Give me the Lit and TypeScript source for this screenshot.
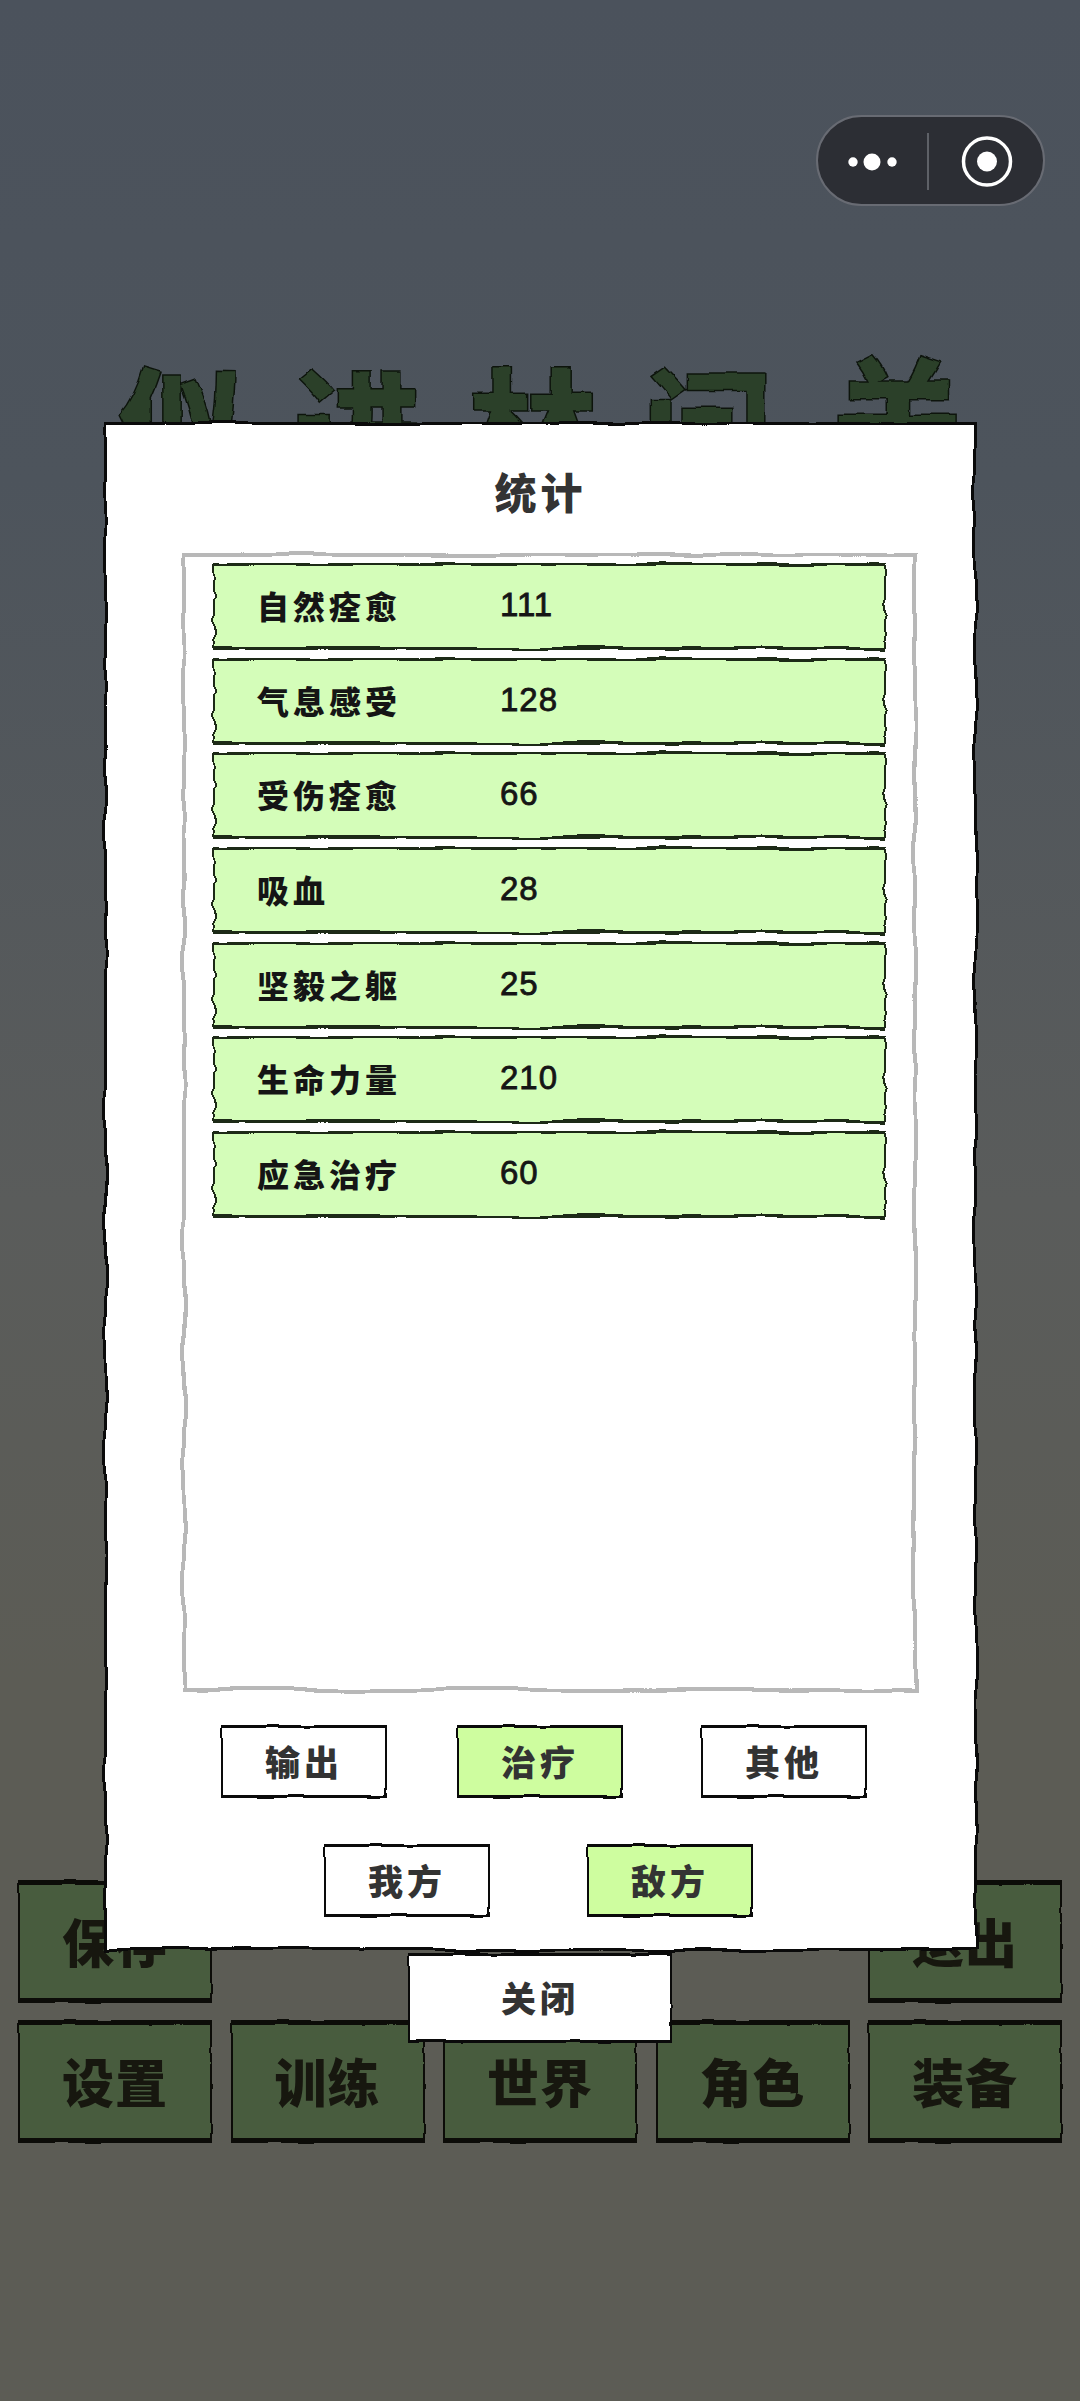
import { LitElement, html, css } from "lit";
import { customElement } from "lit/decorators.js";

const STATS: [string, string][] = [
  ["自然痊愈", "111"],
  ["气息感受", "128"],
  ["受伤痊愈", "66"],
  ["吸血", "28"],
  ["坚毅之躯", "25"],
  ["生命力量", "210"],
  ["应急治疗", "60"],
];

@customElement("app-root")
export class AppRoot extends LitElement {
  static styles = css`
    :host {
      display: block;
      position: relative;
      width: 1080px;
      height: 2401px;
      overflow: hidden;
      font-family: "Noto Sans CJK SC", "Liberation Sans", sans-serif;
      background: linear-gradient(180deg, #4b525c 0%, #4d545c 20%, #5a5c5b 50%, #5c5c55 70%, #5c5c55 100%);
    }
    .defs { position: absolute; width: 0; height: 0; }
    .page {
      isolation: isolate;
      display: flex;
      flex-direction: column;
      padding: 0 18px;
    }
    .game-title {
      margin: 346px 0 0 100px;
      height: 76px;
      display: flex;
      gap: 45px;
      font-size: 130px;
      line-height: 150px;
      font-weight: 900;
      color: #2b4029;
      -webkit-text-stroke: 1.5px #0d140c;
      filter: url(#rough-title);
    }
    .game-title .last { margin: -12px 0 0 14px; }
    .game-grid {
      margin-top: 1458px;
      display: grid;
      grid-template-columns: repeat(5, 194px);
      grid-auto-rows: 123px;
      column-gap: 18.5px;
      row-gap: 17px;
    }
    .col5 { grid-column: 5; }
    .tile {
      position: relative;
      display: flex;
      align-items: center;
      justify-content: center;
      padding-bottom: 3px;
      box-sizing: border-box;
      font-size: 52px;
      font-weight: 900;
      letter-spacing: 1px;
      color: #17170f;
    }
    .tile::before, .box::before, .row::before, .btn::before, .modal::before {
      content: "";
      position: absolute;
      inset: 0;
      box-sizing: border-box;
      z-index: 0;
    }
    .tile > span, .row > span, .btn > span { position: relative; z-index: 1; }
    .tile::before {
      background: #485c3e;
      border: 2px solid #0c0c08;
      border-top-width: 5px;
      border-bottom-width: 5px;
      filter: url(#rough-small);
    }

    .capsule {
      position: absolute;
      left: 816px;
      top: 115px;
      width: 229px;
      height: 91px;
      box-sizing: border-box;
      border-radius: 46px;
      background: #2c2e34;
      border: 2px solid #686b73;
      display: flex;
      align-items: center;
    }
    .capsule svg { display: block; }

    .modal {
      position: absolute;
      z-index: 2;
      left: 104px;
      top: 422px;
      width: 873px;
      height: 1529px;
      display: flex;
      flex-direction: column;
    }
    .modal::before { background: #fff; border: 3px solid #0a0a0a; filter: url(#rough-wide); }
    .modal > * { position: relative; z-index: 1; }
    .title {
      margin-top: 43px;
      height: 52px;
      line-height: 52px;
      text-align: center;
      font-size: 42px;
      font-weight: 900;
      letter-spacing: 4px;
      color: #333;
    }
    .box {
      position: relative;
      box-sizing: border-box;
      margin: 36px 0 0 78px;
      width: 735px;
      height: 1139px;
      padding: 10px 31px;
      display: flex;
      flex-direction: column;
      gap: 7.7px;
    }
    .box::before { border: 4px solid #b8b8b8; background: #fff; filter: url(#rough-wide); }
    .row {
      position: relative;
      height: 87px;
      flex: none;
      display: flex;
      align-items: center;
      padding-bottom: 3px;
      box-sizing: border-box;
      font-size: 32px;
      font-weight: 900;
      color: #151515;
    }
    .row::before {
      background: #d4fdb9;
      border: 2px solid #1d2a17;
      border-top-width: 3px;
      border-bottom-width: 3px;
      filter: url(#rough-row);
    }
    .row .name { width: 243px; margin-left: 44px; letter-spacing: 4px; }
    .row .num {
      font-family: "Liberation Sans", sans-serif;
      font-size: 33px;
      font-weight: 400;
      letter-spacing: 1px;
      -webkit-text-stroke: 0.8px #151515;
    }
    .btn-row { display: flex; }
    .row-a { margin: 33px 0 0 117px; gap: 70px; }
    .row-a .btn:last-child { margin-left: 8px; }
    .row-b { margin: 46px 0 0 220px; gap: 97px; }
    .btn {
      position: relative;
      width: 166px;
      height: 73px;
      flex: none;
      display: flex;
      align-items: center;
      justify-content: center;
      padding-bottom: 3px;
      box-sizing: border-box;
      font-size: 35px;
      font-weight: 900;
      letter-spacing: 4px;
      color: #333;
    }
    .btn::before {
      background: #fff;
      border: 2px solid #0a0a0a;
      border-top-width: 3px;
      border-bottom-width: 3px;
      filter: url(#rough-small);
    }
    .btn.on::before { background: #cefd9f; }
    .close {
      position: absolute;
      z-index: 3;
      left: 408px;
      top: 1953px;
      width: 264px;
      height: 90px;
    }
  `;

  private tile(label: string, cls = "") {
    return html`<div class="tile ${cls}"><span>${label}</span></div>`;
  }

  private btn(label: string, on = false) {
    return html`<div class="btn ${on ? "on" : ""}"><span>${label}</span></div>`;
  }

  render() {
    return html`
      <svg class="defs" aria-hidden="true">
        <filter id="rough-wide" x="-3%" y="-3%" width="106%" height="106%" color-interpolation-filters="sRGB">
          <feTurbulence type="fractalNoise" baseFrequency="0.012 0.018" numOctaves="2" seed="7" result="n" />
          <feDisplacementMap in="SourceGraphic" in2="n" scale="9" xChannelSelector="R" yChannelSelector="G" />
        </filter>
        <filter id="rough-row" x="-3%" y="-6%" width="106%" height="112%" color-interpolation-filters="sRGB">
          <feTurbulence type="fractalNoise" baseFrequency="0.014 0.08" numOctaves="2" seed="11" result="n" />
          <feDisplacementMap in="SourceGraphic" in2="n" scale="7" xChannelSelector="R" yChannelSelector="G" />
        </filter>
        <filter id="rough-small" x="-3%" y="-6%" width="106%" height="112%" color-interpolation-filters="sRGB">
          <feTurbulence type="fractalNoise" baseFrequency="0.03 0.05" numOctaves="2" seed="4" result="n" />
          <feDisplacementMap in="SourceGraphic" in2="n" scale="3" xChannelSelector="R" yChannelSelector="G" />
        </filter>
        <filter id="rough-title" x="-3%" y="-3%" width="106%" height="106%" color-interpolation-filters="sRGB">
          <feTurbulence type="fractalNoise" baseFrequency="0.05" numOctaves="2" seed="3" result="n" />
          <feDisplacementMap in="SourceGraphic" in2="n" scale="5" xChannelSelector="R" yChannelSelector="G" />
        </filter>
      </svg>

      <div class="page">
        <div class="game-title">
          <span>似</span><span>进</span><span>林</span><span>问</span><span class="last">关</span>
        </div>
        <div class="game-grid">
          ${this.tile("保存")}
          ${this.tile("退出", "col5")}
          ${this.tile("设置")}
          ${this.tile("训练")}
          ${this.tile("世界")}
          ${this.tile("角色")}
          ${this.tile("装备")}
        </div>
      </div>

      <div class="capsule">
        <svg width="225" height="87" viewBox="0 0 225 87">
          <circle cx="35" cy="45" r="4.7" fill="#fff" />
          <circle cx="54" cy="45" r="8.5" fill="#fff" />
          <circle cx="74" cy="45" r="4.7" fill="#fff" />
          <rect x="109" y="16" width="2" height="57" fill="#5e6167" />
          <circle cx="169" cy="44.5" r="23.5" fill="none" stroke="#fff" stroke-width="3.5" />
          <circle cx="169" cy="44.5" r="10" fill="#fff" />
        </svg>
      </div>

      <div class="modal">
        <div class="title">统计</div>
        <div class="box">
          ${STATS.map(
            ([n, v]) => html`<div class="row"><span class="name">${n}</span><span class="num">${v}</span></div>`
          )}
        </div>
        <div class="btn-row row-a">
          ${this.btn("输出")}${this.btn("治疗", true)}${this.btn("其他")}
        </div>
        <div class="btn-row row-b">
          ${this.btn("我方")}${this.btn("敌方", true)}
        </div>
      </div>
      <div class="btn close"><span>关闭</span></div>
    `;
  }
}
